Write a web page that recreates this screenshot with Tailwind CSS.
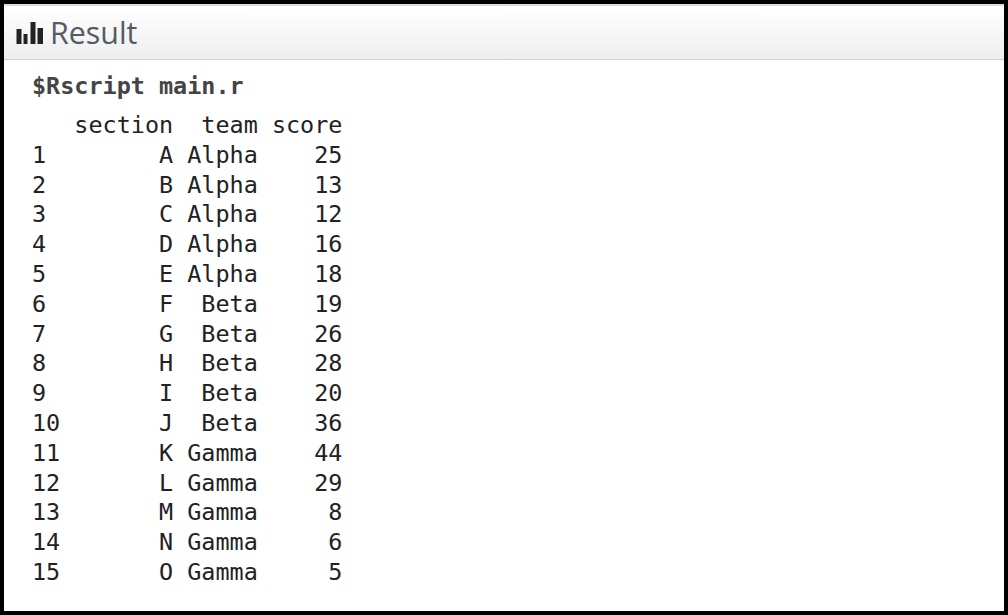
<!DOCTYPE html>
<html>
<head>
<meta charset="utf-8">
<script src="https://cdn.jsdelivr.net/npm/@tailwindcss/browser@4"></script>
</head>
<body class="bg-white">
<div class="w-[1008px] h-[615px] border-x-4 border-t-4 border-b-4 border-black bg-white flex flex-col overflow-hidden">
  <div class="h-[56px] shrink-0 border-t-2 border-t-[#dcdcdc] border-b border-b-[#d0d0d0] bg-gradient-to-b from-white to-[#eeeeee] flex items-center pl-[12px] gap-[6px] text-[#555b66] font-['Open_Sans']">
    <svg width="28" height="22" viewBox="0 0 28 22" fill="#222"><rect x="0.5" y="7" width="5" height="15"/><rect x="7.5" y="12" width="4" height="10"/><rect x="14.5" y="0" width="5" height="22"/><rect x="21.5" y="6" width="5.5" height="16"/></svg>
    <span class="text-[30.4px] leading-none pt-[2px]">Result</span>
  </div>
  <div class="pl-[28px] pt-[11px] font-['DejaVu_Sans_Mono'] text-[#333]">
    <div class="font-bold text-[23.45px] leading-[30px] text-[#444]">$Rscript main.r</div>
    <pre class="font-['DejaVu_Sans_Mono'] text-[23.45px] leading-[29.8px] mt-[10px] text-[#222]">   section  team score
1        A Alpha    25
2        B Alpha    13
3        C Alpha    12
4        D Alpha    16
5        E Alpha    18
6        F  Beta    19
7        G  Beta    26
8        H  Beta    28
9        I  Beta    20
10       J  Beta    36
11       K Gamma    44
12       L Gamma    29
13       M Gamma     8
14       N Gamma     6
15       O Gamma     5</pre>
  </div>
</div>
</body>
</html>
